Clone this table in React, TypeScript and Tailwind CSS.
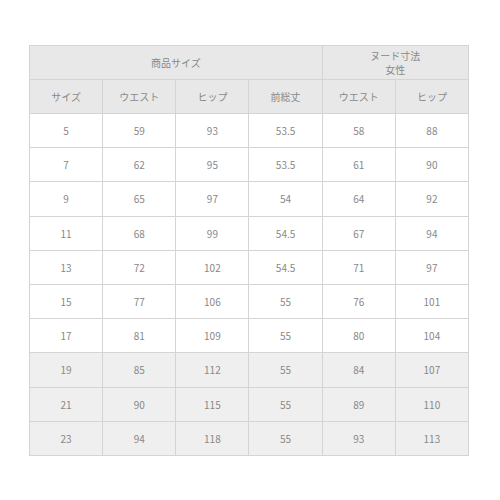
const rows: [string, string, string, string, string, string][] = [
  ['5', '59', '93', '53.5', '58', '88'],
  ['7', '62', '95', '53.5', '61', '90'],
  ['9', '65', '97', '54', '64', '92'],
  ['11', '68', '99', '54.5', '67', '94'],
  ['13', '72', '102', '54.5', '71', '97'],
  ['15', '77', '106', '55', '76', '101'],
  ['17', '81', '109', '55', '80', '104'],
  ['19', '85', '112', '55', '84', '107'],
  ['21', '90', '115', '55', '89', '110'],
  ['23', '94', '118', '55', '93', '113'],
]

const cell = 'border border-[#d4d4d4] text-center align-middle'

export default function App() {
  return (
    <div className="w-[500px] h-[500px] bg-white pt-[45px] pl-[29px] font-['Noto_Sans_CJK_JP','Noto_Sans',sans-serif] text-[10px] text-[#888888]">
      <table className="w-[440px] table-fixed border-collapse">
        <thead>
          <tr className="h-[34px] bg-[#e8e8e8]">
            <th colSpan={4} className={`${cell} font-normal`}>商品サイズ</th>
            <th colSpan={2} className={`${cell} font-normal`}>
              <div className="leading-[14px]">ヌード寸法</div>
              <div className="leading-[14px]">女性</div>
            </th>
          </tr>
          <tr className="h-[34px] bg-[#e8e8e8]">
            {['サイズ', 'ウエスト', 'ヒップ', '前総丈', 'ウエスト', 'ヒップ'].map((h, i) => (
              <th key={i} className={`${cell} font-normal`}>{h}</th>
            ))}
          </tr>
        </thead>
        <tbody>
          {rows.map((r, i) => (
            <tr key={i} className={`h-[34.2px] ${i >= 7 ? 'bg-[#efefef]' : 'bg-white'}`}>
              {r.map((v, j) => (
                <td key={j} className={cell}>{v}</td>
              ))}
            </tr>
          ))}
        </tbody>
      </table>
    </div>
  )
}
